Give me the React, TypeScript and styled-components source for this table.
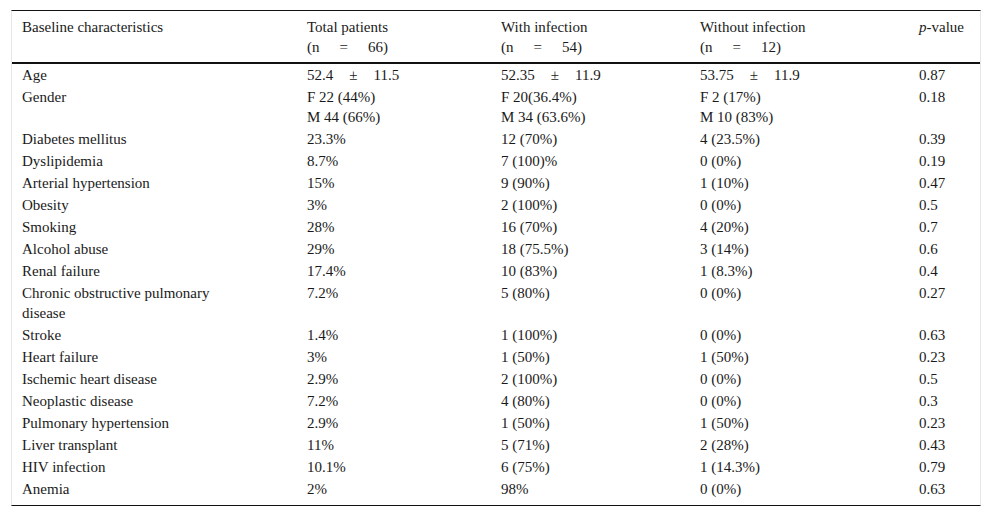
import React from 'react'
import styled, { createGlobalStyle } from 'styled-components'

const GlobalStyle = createGlobalStyle`
  html, body {
    margin: 0;
    padding: 0;
    background: #ffffff;
  }
  body {
    font-family: 'Liberation Serif', 'Times New Roman', serif;
    color: #1a1a1a;
  }
`

const Frame = styled.div`
  margin: 10px 11px 0 11px;
  width: 970px;
  box-sizing: border-box;
  border-top: 1px solid #111;
  border-bottom: 1px solid #111;
  border-left: 1px solid #e6e6e6;
  border-right: 1px solid #e6e6e6;
  padding-bottom: 5px;
`

const Table = styled.table`
  width: 100%;
  border-collapse: collapse;
  table-layout: fixed;
  font-size: 15px;
  line-height: 20px;
`

const HeadCell = styled.th`
  text-align: left;
  font-weight: normal;
  vertical-align: top;
  padding: 6px 10px 5px 10px;
  border-bottom: 2px solid #111;
`

const Cell = styled.td<{ $wrap?: boolean }>`
  vertical-align: top;
  padding: 1px 10px;
  padding-right: ${(props) => (props.$wrap ? '70px' : '10px')};
`

const Gap = styled.span<{ $w: number }>`
  display: inline-block;
  width: ${(props) => props.$w}px;
`

const Italic = styled.i`
  font-style: italic;
`

const Stat = ({ a, op, b, w = 16 }: { a: string; op: string; b: string; w?: number }) => (
  <>
    {a}
    <Gap $w={w} />
    {op}
    <Gap $w={w} />
    {b}
  </>
)

type Row = { label: string; total: React.ReactNode; withInf: React.ReactNode; without: React.ReactNode; p: string }

const rows: Row[] = [
  {
    label: 'Age',
    total: <Stat a="52.4" op="±" b="11.5" />,
    withInf: <Stat a="52.35" op="±" b="11.9" />,
    without: <Stat a="53.75" op="±" b="11.9" />,
    p: '0.87',
  },
  {
    label: 'Gender',
    total: (
      <>
        F 22 (44%)
        <br />M 44 (66%)
      </>
    ),
    withInf: (
      <>
        F 20(36.4%)
        <br />M 34 (63.6%)
      </>
    ),
    without: (
      <>
        F 2 (17%)
        <br />M 10 (83%)
      </>
    ),
    p: '0.18',
  },
  { label: 'Diabetes mellitus', total: '23.3%', withInf: '12 (70%)', without: '4 (23.5%)', p: '0.39' },
  { label: 'Dyslipidemia', total: '8.7%', withInf: '7 (100)%', without: '0 (0%)', p: '0.19' },
  { label: 'Arterial hypertension', total: '15%', withInf: '9 (90%)', without: '1 (10%)', p: '0.47' },
  { label: 'Obesity', total: '3%', withInf: '2 (100%)', without: '0 (0%)', p: '0.5' },
  { label: 'Smoking', total: '28%', withInf: '16 (70%)', without: '4 (20%)', p: '0.7' },
  { label: 'Alcohol abuse', total: '29%', withInf: '18 (75.5%)', without: '3 (14%)', p: '0.6' },
  { label: 'Renal failure', total: '17.4%', withInf: '10 (83%)', without: '1 (8.3%)', p: '0.4' },
  { label: 'Chronic obstructive pulmonary disease', total: '7.2%', withInf: '5 (80%)', without: '0 (0%)', p: '0.27' },
  { label: 'Stroke', total: '1.4%', withInf: '1 (100%)', without: '0 (0%)', p: '0.63' },
  { label: 'Heart failure', total: '3%', withInf: '1 (50%)', without: '1 (50%)', p: '0.23' },
  { label: 'Ischemic heart disease', total: '2.9%', withInf: '2 (100%)', without: '0 (0%)', p: '0.5' },
  { label: 'Neoplastic disease', total: '7.2%', withInf: '4 (80%)', without: '0 (0%)', p: '0.3' },
  { label: 'Pulmonary hypertension', total: '2.9%', withInf: '1 (50%)', without: '1 (50%)', p: '0.23' },
  { label: 'Liver transplant', total: '11%', withInf: '5 (71%)', without: '2 (28%)', p: '0.43' },
  { label: 'HIV infection', total: '10.1%', withInf: '6 (75%)', without: '1 (14.3%)', p: '0.79' },
  { label: 'Anemia', total: '2%', withInf: '98%', without: '0 (0%)', p: '0.63' },
]

export default function App() {
  return (
    <>
      <GlobalStyle />
      <Frame>
        <Table>
          <colgroup>
            <col style={{ width: 285 }} />
            <col style={{ width: 194 }} />
            <col style={{ width: 199 }} />
            <col style={{ width: 219 }} />
            <col />
          </colgroup>
          <thead>
            <tr>
              <HeadCell>Baseline characteristics</HeadCell>
              <HeadCell>
                Total patients
                <br />
                <Stat a="(n" op="=" b="66)" w={20} />
              </HeadCell>
              <HeadCell>
                With infection
                <br />
                <Stat a="(n" op="=" b="54)" w={20} />
              </HeadCell>
              <HeadCell>
                Without infection
                <br />
                <Stat a="(n" op="=" b="12)" w={20} />
              </HeadCell>
              <HeadCell>
                <Italic>p</Italic>-value
              </HeadCell>
            </tr>
          </thead>
          <tbody>
            {rows.map((r) => (
              <tr key={r.label}>
                <Cell $wrap>{r.label}</Cell>
                <Cell>{r.total}</Cell>
                <Cell>{r.withInf}</Cell>
                <Cell>{r.without}</Cell>
                <Cell>{r.p}</Cell>
              </tr>
            ))}
          </tbody>
        </Table>
      </Frame>
    </>
  )
}
